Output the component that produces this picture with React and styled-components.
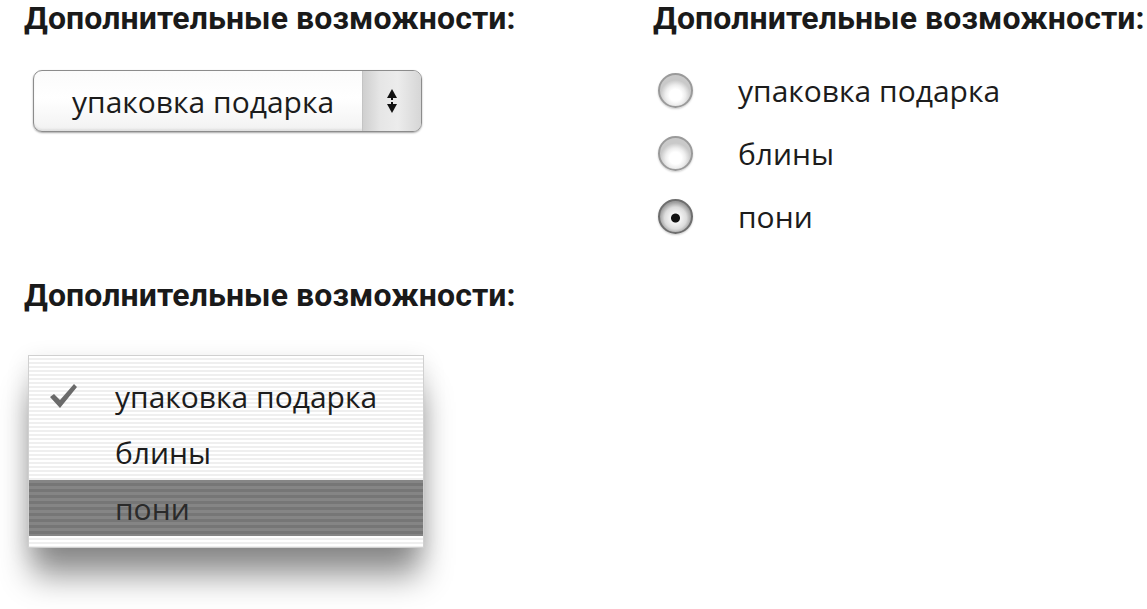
import React from 'react';
import styled, { createGlobalStyle } from 'styled-components';

const GlobalStyle = createGlobalStyle`
  html, body {
    margin: 0;
    padding: 0;
    background: #ffffff;
  }
  body {
    font-family: "Open Sans", "Noto Sans", sans-serif;
    color: #1c1c1c;
  }
`;

const Page = styled.div`
  width: 1147px;
  height: 609px;
  overflow: hidden;
  padding-left: 24px;
  box-sizing: border-box;
`;

const TopRow = styled.div`
  display: grid;
  grid-template-columns: 629px 1fr;
`;

const Section = styled.section`
  display: flex;
  flex-direction: column;
`;

const Heading = styled.h2`
  margin: 0;
  font-family: Roboto, "Open Sans", sans-serif;
  font-size: 32px;
  line-height: 37px;
  font-weight: 700;
  letter-spacing: 0.1px;
  color: #1a1a1a;
  white-space: nowrap;
`;

const Select = styled.div`
  margin-top: 33px;
  margin-left: 9px;
  width: 389px;
  height: 62px;
  box-sizing: border-box;
  display: flex;
  border: 1px solid #8c8c8c;
  border-radius: 9px;
  background: linear-gradient(#fbfbfb, #ffffff 45%, #f2f2f2);
  box-shadow: 0 1px 2px rgba(0, 0, 0, 0.35), inset 0 -2px 2px rgba(0, 0, 0, 0.08);
  overflow: hidden;
`;

const SelectValue = styled.div`
  flex: 1;
  display: flex;
  align-items: center;
  padding-left: 38px;
  font-size: 30px;
  color: #1c1c1c;
`;

const Stepper = styled.div`
  width: 58px;
  border-left: 1px solid #c4c4c4;
  background: linear-gradient(90deg, #cfcfcf, #e6e6e6 30%, #ececec 60%, #d6d6d6);
  display: flex;
  align-items: center;
  justify-content: center;
`;

const RadioList = styled.div`
  margin-top: 35px;
  display: flex;
  flex-direction: column;
  gap: 27px;
`;

const RadioRow = styled.label`
  display: flex;
  align-items: center;
  gap: 45px;
  margin-left: 5px;
  height: 36px;
  font-size: 30px;
`;

const RadioDot = styled.span`
  width: 35px;
  height: 35px;
  border-radius: 50%;
  box-sizing: border-box;
  border: 2px solid ${p => (p.checked ? '#6e6e6e' : '#9a9a9a')};
  background: ${p =>
    p.checked
      ? 'radial-gradient(circle at 50% 55%, #111 0 4px, #f4f4f4 5px, #dcdcdc 11px, #9c9c9c 16px)'
      : 'radial-gradient(circle at 50% 65%, #ffffff 0 6px, #eeeeee 10px, #c9c9c9 15px)'};
  box-shadow: 0 1px 2px rgba(0, 0, 0, 0.2);
  flex-shrink: 0;
`;

const LowerSection = styled(Section)`
  margin-top: 43px;
`;

const ListBox = styled.div`
  margin-top: 41px;
  margin-left: 4px;
  width: 396px;
  box-sizing: border-box;
  padding: 12px 0 11px;
  border: 1px solid #d0d0d0;
  background-color: #ffffff;
  background-image: repeating-linear-gradient(#ffffff 0 2px, #efefef 2px 4px);
  box-shadow: 0 32px 30px -4px rgba(0, 0, 0, 0.42), 0 6px 22px rgba(0, 0, 0, 0.12);
`;

const ListItem = styled.div`
  height: 56px;
  display: flex;
  align-items: center;
  font-size: 30px;
  background-image: ${p =>
    p.selected ? 'repeating-linear-gradient(#858585 0 3px, #767676 3px 6px)' : 'none'};
  color: ${p => (p.selected ? '#2a2a2a' : '#1c1c1c')};
`;

const Mark = styled.span`
  width: 86px;
  box-sizing: border-box;
  display: flex;
  padding-left: 19px;
`;

function Arrows() {
  return (
    <svg width="12" height="26" viewBox="0 0 12 26">
      <path d="M6 1 L11 10 L1 10 Z" fill="#111" />
      <rect x="5" y="10" width="2" height="2" fill="#111" />
      <rect x="5" y="14" width="2" height="2" fill="#111" />
      <path d="M1 16 L11 16 L6 25 Z" fill="#111" />
    </svg>
  );
}

function Check() {
  return (
    <svg width="30" height="28" viewBox="0 0 30 28">
      <path d="M2 15 L6 12 L12 18 L26 2 L29 5 L12 26 Z" fill="#6a6a6a" />
    </svg>
  );
}

const radios = [
  { label: 'упаковка подарка', checked: false },
  { label: 'блины', checked: false },
  { label: 'пони', checked: true }
];

const items = [
  { label: 'упаковка подарка', checked: true },
  { label: 'блины' },
  { label: 'пони', selected: true }
];

export default function App() {
  return (
    <Page>
      <GlobalStyle />
      <TopRow>
        <Section>
          <Heading>Дополнительные возможности:</Heading>
          <Select>
            <SelectValue>упаковка подарка</SelectValue>
            <Stepper><Arrows /></Stepper>
          </Select>
        </Section>
        <Section>
          <Heading>Дополнительные возможности:</Heading>
          <RadioList>
            {radios.map(r => (
              <RadioRow key={r.label}>
                <RadioDot checked={r.checked} />
                {r.label}
              </RadioRow>
            ))}
          </RadioList>
        </Section>
      </TopRow>

      <LowerSection>
        <Heading>Дополнительные возможности:</Heading>
        <ListBox>
          {items.map(i => (
            <ListItem key={i.label} selected={i.selected}>
              <Mark>{i.checked && <Check />}</Mark>
              {i.label}
            </ListItem>
          ))}
        </ListBox>
      </LowerSection>
    </Page>
  );
}
